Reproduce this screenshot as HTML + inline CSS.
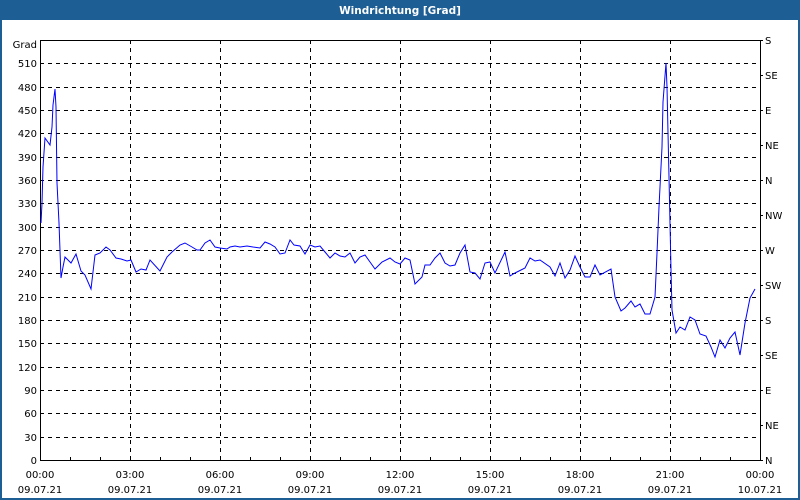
<!DOCTYPE html>
<html><head><meta charset="utf-8"><style>
html,body{margin:0;padding:0;background:#fff;}
svg{display:block;}
text{font-family:"DejaVu Sans","Liberation Sans",sans-serif;font-size:10px;fill:#000;}
</style></head><body>
<svg width="800" height="500" viewBox="0 0 800 500" xmlns="http://www.w3.org/2000/svg">
<rect x="0" y="0" width="800" height="500" fill="#fff"/>
<rect x="0" y="0" width="800" height="20" fill="#1d5e94"/>
<rect x="0" y="0" width="2" height="500" fill="#1d5e94"/>
<rect x="798" y="0" width="2" height="500" fill="#1d5e94"/>
<rect x="0" y="498" width="800" height="2" fill="#1d5e94"/>
<text x="400" y="14" text-anchor="middle" style="fill:#fff;font-weight:bold;font-size:10.5px">Windrichtung [Grad]</text>
<g stroke="#000" stroke-width="1" stroke-dasharray="4,4" shape-rendering="crispEdges">
<line x1="40" y1="63.5" x2="760" y2="63.5"/><line x1="40" y1="87.5" x2="760" y2="87.5"/>
<line x1="40" y1="110.5" x2="760" y2="110.5"/><line x1="40" y1="133.5" x2="760" y2="133.5"/>
<line x1="40" y1="157.5" x2="760" y2="157.5"/><line x1="40" y1="180.5" x2="760" y2="180.5"/>
<line x1="40" y1="203.5" x2="760" y2="203.5"/><line x1="40" y1="227.5" x2="760" y2="227.5"/>
<line x1="40" y1="250.5" x2="760" y2="250.5"/><line x1="40" y1="273.5" x2="760" y2="273.5"/>
<line x1="40" y1="297.5" x2="760" y2="297.5"/><line x1="40" y1="320.5" x2="760" y2="320.5"/>
<line x1="40" y1="343.5" x2="760" y2="343.5"/><line x1="40" y1="367.5" x2="760" y2="367.5"/>
<line x1="40" y1="390.5" x2="760" y2="390.5"/><line x1="40" y1="413.5" x2="760" y2="413.5"/>
<line x1="40" y1="437.5" x2="760" y2="437.5"/>
<line x1="130.5" y1="40" x2="130.5" y2="460"/><line x1="220.5" y1="40" x2="220.5" y2="460"/>
<line x1="310.5" y1="40" x2="310.5" y2="460"/><line x1="400.5" y1="40" x2="400.5" y2="460"/>
<line x1="490.5" y1="40" x2="490.5" y2="460"/><line x1="580.5" y1="40" x2="580.5" y2="460"/>
<line x1="670.5" y1="40" x2="670.5" y2="460"/>
</g>
<g stroke="#000" stroke-width="1" shape-rendering="crispEdges">
<path d="M40.5 40.5H760.5V460.5H40.5Z" fill="none"/>
<path d="M70.5 460v-3M100.5 460v-3M160.5 460v-3M190.5 460v-3M250.5 460v-3M280.5 460v-3M340.5 460v-3M370.5 460v-3M430.5 460v-3M460.5 460v-3M520.5 460v-3M550.5 460v-3M610.5 460v-3M640.5 460v-3M700.5 460v-3M730.5 460v-3M130.5 460v-3M220.5 460v-3M310.5 460v-3M400.5 460v-3M490.5 460v-3M580.5 460v-3M670.5 460v-3"/>
<path d="M760 40.5h3M760 75.5h3M760 110.5h3M760 145.5h3M760 180.5h3M760 215.5h3M760 250.5h3M760 285.5h3M760 320.5h3M760 355.5h3M760 390.5h3M760 425.5h3M760 460.5h3"/>
</g>
<g text-anchor="end">
<text x="37" y="48">Grad</text>
<text x="37" y="67">510</text><text x="37" y="91">480</text><text x="37" y="114">450</text>
<text x="37" y="137">420</text><text x="37" y="161">390</text><text x="37" y="184">360</text>
<text x="37" y="207">330</text><text x="37" y="231">300</text><text x="37" y="254">270</text>
<text x="37" y="277">240</text><text x="37" y="301">210</text><text x="37" y="324">180</text>
<text x="37" y="347">150</text><text x="37" y="371">120</text><text x="37" y="394">90</text>
<text x="37" y="417">60</text><text x="37" y="441">30</text><text x="37" y="464">0</text>
</g>
<g>
<text x="765" y="44">S</text><text x="765" y="79">SE</text><text x="765" y="114">E</text>
<text x="765" y="149">NE</text><text x="765" y="184">N</text><text x="765" y="219">NW</text>
<text x="765" y="254">W</text><text x="765" y="289">SW</text><text x="765" y="324">S</text>
<text x="765" y="359">SE</text><text x="765" y="394">E</text><text x="765" y="429">NE</text>
<text x="765" y="464">N</text>
</g>
<g text-anchor="middle">
<text x="40" y="478">00:00</text><text x="130" y="478">03:00</text><text x="220" y="478">06:00</text>
<text x="310" y="478">09:00</text><text x="400" y="478">12:00</text><text x="490" y="478">15:00</text>
<text x="580" y="478">18:00</text><text x="670" y="478">21:00</text><text x="760" y="478">00:00</text>
<text x="40" y="493">09.07.21</text><text x="130" y="493">09.07.21</text><text x="220" y="493">09.07.21</text>
<text x="310" y="493">09.07.21</text><text x="400" y="493">09.07.21</text><text x="490" y="493">09.07.21</text>
<text x="580" y="493">09.07.21</text><text x="670" y="493">09.07.21</text><text x="760" y="493">10.07.21</text>
</g>
<polyline fill="none" stroke="#0000ff" stroke-width="1" points="
41,223 42,203 43,167 45,138 50,145 52,127 53,105 55,89 56,107 57,183 59,223 61,278 63,267 65,257 71,263 76,254 81,271 85,275 91,289 95,255 100,253 106,247 110,250 116,258 121,259 127,261 131,260 136,272 141,269 146,270 150,260 160,271 167,257 172,252 180,245 185,243 192,247 197,250 200,250 205,243 210,240 215,247 220,248 227,249 230,247 235,246 240,247 247,246 253,247 260,248 265,242 270,244 275,247 280,254 285,253 290,240 294,245 300,246 305,254 310,245 315,247 320,246 325,252 330,258 335,253 340,256 345,257 350,253 355,263 360,257 365,255 370,262 375,269 382,262 390,258 395,262 400,264 405,258 410,260 415,284 422,277 425,265 430,265 435,258 440,253 445,263 450,266 455,265 460,253 465,245 470,272 475,273 480,279 485,263 490,262 495,273 505,252 510,276 515,273 525,268 530,258 535,261 540,260 550,267 555,276 560,263 565,278 570,270 575,256 580,267 585,277 590,277 595,265 600,275 611,269 615,297 621,311 625,308 631,301 635,307 640,304 645,314 650,314 655,297 657,253 659,207 662,147 663,102 666,63 667,87 668,133 669,177 670,223 671,270 672,310 676,333 680,327 685,330 690,317 695,320 700,334 706,336 711,347 715,357 720,340 725,348 730,338 735,332 740,355 745,323 750,298 755,289"/>
</svg>
</body></html>
